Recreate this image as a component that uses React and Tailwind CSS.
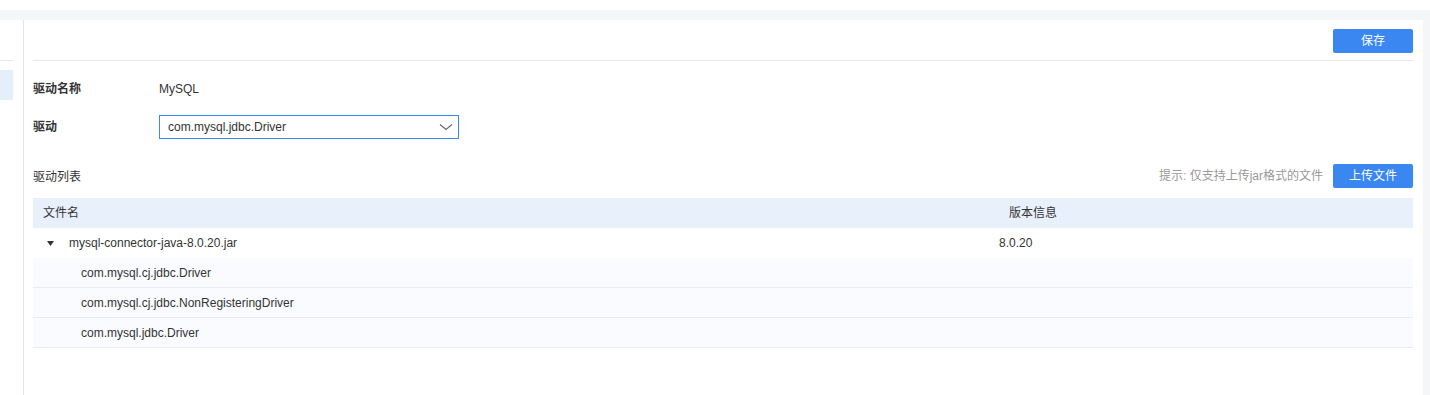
import React from 'react';

const font = { fontFamily: '"Liberation Sans", "Noto Sans CJK SC", sans-serif' };

const drivers = [
  'com.mysql.cj.jdbc.Driver',
  'com.mysql.cj.jdbc.NonRegisteringDriver',
  'com.mysql.jdbc.Driver',
];

const App = () => {
  return (
    <div style={font} className="w-[1430px] h-[395px] bg-white text-[12px] text-[#333] flex flex-col overflow-hidden">
      <div className="h-[10px] bg-white" />
      <div className="h-[10px] bg-[#f5f6f8]" />
      <div className="flex flex-1">
        {/* sidebar */}
        <div className="w-[24px] border-r border-[#e4e5e7] flex flex-col">
          <div className="h-[41px] w-[13px] border-b border-[#e8e8e8]" />
          <div className="mt-[9px] h-[30px] w-[13px] bg-[#e5eefc]" />
        </div>

        {/* main */}
        <div className="flex-1 pl-[9px] pr-[10px]">
          <div className="flex justify-end pt-[9px] pb-[7px] border-b border-[#e8e8e8]">
            <button className="w-[80px] h-[24px] bg-[#3a87f2] text-white rounded-[2px] text-[12px]">保存</button>
          </div>

          <div className="mt-[16px] h-[24px] flex items-center">
            <div className="w-[126px] font-bold">驱动名称</div>
            <div>MySQL</div>
          </div>

          <div className="mt-[14px] h-[24px] flex items-center">
            <div className="w-[126px] font-bold">驱动</div>
            <div className="w-[300px] h-[24px] border border-[#3a87f2] flex items-center justify-between pl-[8px] pr-[4px]">
              <span>com.mysql.jdbc.Driver</span>
              <svg width="16" height="10" viewBox="0 0 16 10" fill="none">
                <path d="M2 2.5 L8 7.5 L14 2.5" stroke="#666" strokeWidth="1.1" />
              </svg>
            </div>
          </div>

          <div className="mt-[25px] h-[24px] flex items-center justify-between">
            <div className="pt-[2px]">驱动列表</div>
            <div className="flex items-center gap-[10px]">
              <span className="text-[#999]">提示: 仅支持上传jar格式的文件</span>
              <button className="w-[80px] h-[24px] bg-[#3a87f2] text-white rounded-[2px] text-[12px]">上传文件</button>
            </div>
          </div>

          <div className="mt-[10px]">
            <div className="h-[30px] bg-[#e8f0fc] flex items-center">
              <div className="w-[966px] pl-[10px]">文件名</div>
              <div className="pl-[10px]">版本信息</div>
            </div>
            <div className="h-[30px] flex items-center">
              <div className="w-[966px] flex items-center">
                <svg className="ml-[14px] mr-[15px]" width="7" height="5" viewBox="0 0 7 5">
                  <path d="M0 0 L7 0 L3.5 5 Z" fill="#333" />
                </svg>
                <span>mysql-connector-java-8.0.20.jar</span>
              </div>
              <div>8.0.20</div>
            </div>
            {drivers.map((d) => (
              <div key={d} className="h-[30px] flex items-center bg-[#fafbfe] border-b border-[#e6ebf4] pl-[48px]">
                {d}
              </div>
            ))}
          </div>
        </div>

        <div className="w-[7px] bg-[#f5f6f8]" />
      </div>
    </div>
  );
};

export default App;
